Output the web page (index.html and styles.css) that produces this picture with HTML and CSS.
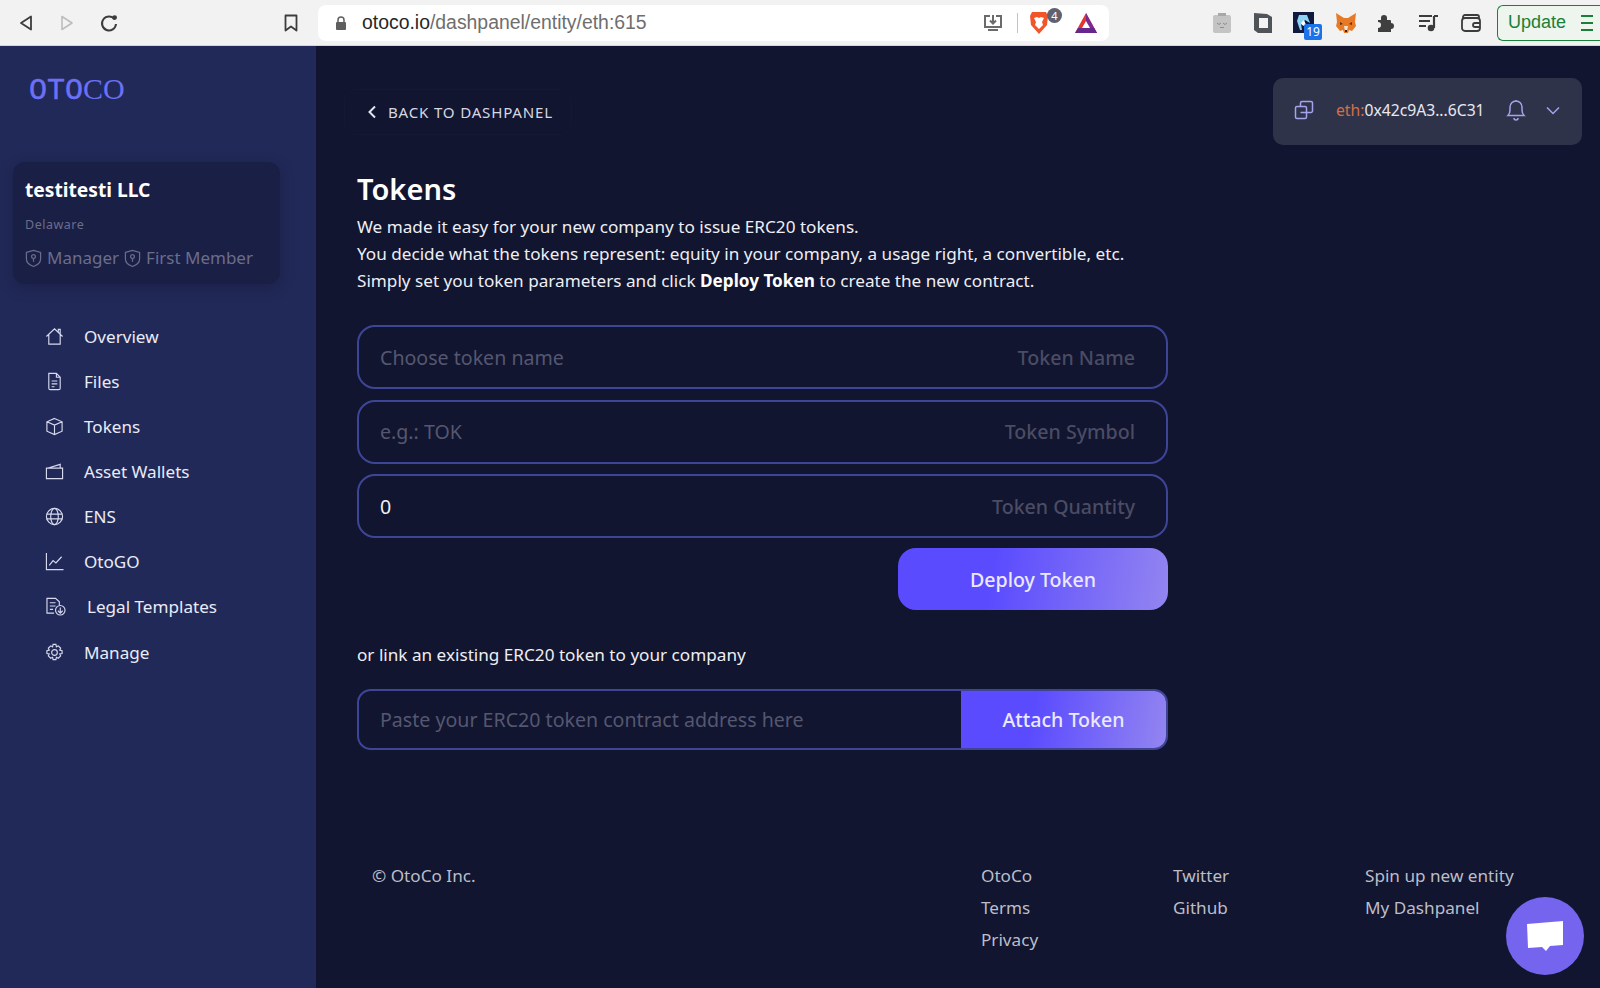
FILE: index.html
```html
<!DOCTYPE html>
<html lang="en">
<head>
    <meta charset="UTF-8">
    <title>Tokens - OtoCo</title>
    <link rel="stylesheet" href="styles.css">
</head>
<body>
    <!-- Browser toolbar -->
    <div class="toolbar">
        <div class="nav-buttons">
            <svg width="18" height="20" viewBox="0 0 18 20"><path d="M14 3.500v13L4 10z" fill="none" stroke="#3c3c3c" stroke-width="1.800" stroke-linejoin="round"/></svg>
            <svg width="18" height="20" viewBox="0 0 18 20"><path d="M4 3.500v13L14 10z" fill="none" stroke="#bdbdbd" stroke-width="1.600" stroke-linejoin="round"/></svg>
            <svg width="20" height="20" viewBox="0 0 20 20"><path d="M15.600 6.200A7 7 0 1 0 17 11" fill="none" stroke="#3c3c3c" stroke-width="2"/><circle cx="15.600" cy="4.600" r="2.400" fill="#3c3c3c"/></svg>
        </div>
        <svg class="bookmark" width="14" height="18" viewBox="0 0 14 18"><path d="M1.500 1.500h11v15L7 12.500 1.500 16.500z" fill="none" stroke="#3c3c3c" stroke-width="1.800" stroke-linejoin="round"/></svg>
        <div class="omnibox">
            <svg width="12" height="14" viewBox="0 0 12 14"><path d="M3 6V4a3 3 0 0 1 6 0v2" fill="none" stroke="#5f5f5f" stroke-width="1.500"/><rect x="1" y="6" width="10" height="8" rx="1" fill="#5f5f5f"/></svg>
            <span class="url"><b>otoco.io</b>/dashpanel/entity/eth:615</span>
            <svg width="20" height="20" viewBox="0 0 20 20"><path d="M7 3H2v11h16V3h-5M10 2v8M7 7.500l3 3 3-3M5 17h10" fill="none" stroke="#6b6b6b" stroke-width="2"/></svg>
            <i class="omni-sep"></i>
            <span class="brave">
                <svg width="20" height="24" viewBox="0 0 20 24"><path d="M3 1h14l2 4-1 9-8 9-8-9-1-9z" fill="#f1562b"/><path d="M5 7l3-1 2 1 2-1 3 1-2 4 1 3-4 4-4-4 1-3z" fill="#fff"/></svg>
                <span class="brave-count">4</span>
            </span>
            <svg class="bat" width="24" height="22" viewBox="0 0 24 22"><path d="M12 1L1 21h22z" fill="#e2352f"/><path d="M12 1l11 20h-7L12 13z" fill="#7b2a8f"/><path d="M1 21h22l-3-5H4z" fill="#66278d"/><path d="M12 9l-4 7h8z" fill="#fff"/></svg>
        </div>
        <div class="extensions">
            <svg width="20" height="22" viewBox="0 0 20 22"><rect x="1" y="3" width="18" height="18" rx="2" fill="#c4c4c4"/><rect x="6" y="1" width="8" height="3" fill="#a8a8a8"/><path d="M5 11l2 1.500 2-1.500M11 11l2 1.500 2-1.500M8 15.500h4" fill="none" stroke="#8c8c8c"/></svg>
            <svg width="20" height="22" viewBox="0 0 20 22"><path d="M1 1l13 1 5 3v16H5l-4-3z" fill="#4f5459"/><rect x="6" y="6" width="9" height="10" fill="#f2f2f2"/></svg>
            <span class="ext-badge">
                <svg width="21" height="21" viewBox="0 0 21 21"><rect width="21" height="21" fill="#101a3e"/><path d="M6 3h8l3 8-5-3-4 4 1 6H7L4 9z" fill="#8fd3f4"/><path d="M8 11a3 3 0 0 0 5 2l-2-5z" fill="#fff"/></svg>
                <span class="ext-count">19</span>
            </span>
            <svg width="22" height="22" viewBox="0 0 22 22"><path d="M1 1l8 5h4l8-5-1 9 1 4-4 5-3-1-1 3H9l-1-3-3 1-4-5 1-4z" fill="#e87a25"/><path d="M9 14h4l-1 5h-2z" fill="#f5e3d0"/><path d="M5 10l3 2-3 1zM17 10l-3 2 3 1z" fill="#5b3416"/><path d="M10 18h2v2h-2z" fill="#33261b"/></svg>
            <svg width="20" height="20" viewBox="0 0 20 20"><path d="M1 7h3V5a3 3 0 0 1 6 0v2h3a1 1 0 0 1 1 1v2a3 3 0 0 1 0 6v3H1v-4a3 3 0 0 0 0-6z" fill="#3f3f3f"/></svg>
            <svg width="22" height="20" viewBox="0 0 22 20"><path d="M1 3h13M1 8h11M1 13h7" stroke="#3c3c3c" stroke-width="2" fill="none"/><path d="M16 3v12" stroke="#3c3c3c" stroke-width="2.200"/><path d="M16 3h4" stroke="#3c3c3c" stroke-width="2"/><circle cx="13" cy="15" r="3.300" fill="#3c3c3c"/></svg>
            <svg width="22" height="20" viewBox="0 0 22 20"><path d="M3 5V4a2 2 0 0 1 2-2h12a2 2 0 0 1 2 2v1" fill="none" stroke="#3c3c3c" stroke-width="1.800"/><rect x="2" y="5" width="18" height="13" rx="3" fill="none" stroke="#3c3c3c" stroke-width="1.800"/><path d="M20 10h-5a2 2 0 0 0 0 4h5" fill="none" stroke="#3c3c3c" stroke-width="1.800"/></svg>
        </div>
        <div class="update">
            <span>Update</span>
            <svg width="14" height="18" viewBox="0 0 14 18"><path d="M1 2h12M1 9h12M1 16h12" stroke="#1a7f37" stroke-width="1.800"/></svg>
        </div>
    </div>

    <div class="app">
        <!-- Sidebar -->
        <aside class="sidebar">
            <div class="logo"><span class="logo-mono">OTO</span><span class="logo-serif">CO</span></div>
            <div class="entity-card">
                <div class="entity-name">testitesti LLC</div>
                <div class="entity-state">Delaware</div>
                <div class="entity-badges">
                    <svg class="shield" viewBox="0 0 18 20"><path d="M1.500 3.500L9 1.500l7.500 2v7c0 4-3.500 6.500-7.500 8-4-1.500-7.500-4-7.500-8z"/><circle cx="9" cy="8" r="2"/><path d="M9 10v3.500"/></svg>
                    <span>Manager</span>
                    <svg class="shield" viewBox="0 0 18 20"><path d="M1.500 3.500L9 1.500l7.500 2v7c0 4-3.500 6.500-7.500 8-4-1.500-7.500-4-7.500-8z"/><circle cx="9" cy="8" r="2"/><path d="M9 10v3.500"/></svg>
                    <span>First Member</span>
                </div>
            </div>
            <nav class="menu">
                <a class="menu-item">
                    <svg viewBox="0 0 20 20"><path d="M1.500 10L10 2l8.500 8M4 8v10h12V8M14 5V2.500h2v4.500"/></svg>
                    <span>Overview</span>
                </a>
                <a class="menu-item">
                    <svg viewBox="0 0 20 20"><path d="M4 1.500h8l4 4V17a1.500 1.500 0 0 1-1.500 1.500h-9A1.500 1.500 0 0 1 4 17zM12 1.500v4h4M7 9.500h6M7 12.500h6M7 15.500h3"/></svg>
                    <span>Files</span>
                </a>
                <a class="menu-item">
                    <svg viewBox="0 0 20 20"><path d="M10 1.500l8 3.500v10l-8 3.500L2 15V5zM2 5l8 3.500L18 5M10 8.500v10"/></svg>
                    <span>Tokens</span>
                </a>
                <a class="menu-item">
                    <svg viewBox="0 0 20 20"><path d="M1.500 6.500h17v11h-17zM2.500 6.500L16 2.500v4"/></svg>
                    <span>Asset Wallets</span>
                </a>
                <a class="menu-item">
                    <svg viewBox="0 0 20 20"><circle cx="10" cy="10" r="8.500"/><ellipse cx="10" cy="10" rx="4" ry="8.500"/><path d="M1.500 7.500h17M1.500 12.500h17"/></svg>
                    <span>ENS</span>
                </a>
                <a class="menu-item">
                    <svg viewBox="0 0 20 20"><path d="M1.500 1v17.500H19.500M4.500 14l4-5 3 2.500 6-6.500"/></svg>
                    <span>OtoGO</span>
                </a>
                <a class="menu-item legal">
                    <svg viewBox="0 0 22 20"><path d="M9 17H1.500V1.500h9l4 3.500v4M4.500 6h6M4.500 9.500h6M4.500 13h3.500"/><circle cx="15.500" cy="14" r="5"/><path d="M15.500 11v6M13 14.500l2.500 2.500 2.500-2.500"/></svg>
                    <span>Legal Templates</span>
                </a>
                <a class="menu-item manage">
                    <svg viewBox="0 0 20 20"><circle cx="10" cy="10" r="3"/><path d="M8.500 1.500h3l.5 2.500 2-1 2.500 2.500-1 2 2.500.5v3l-2.500.5 1 2-2.500 2.500-2-1-.5 2.500h-3l-.5-2.500-2 1-2.500-2.500 1-2-2.500-.5v-3l2.500-.5-1-2 2.500-2.500 2 1z"/></svg>
                    <span>Manage</span>
                </a>
            </nav>
        </aside>

        <!-- Main content -->
        <main class="content">
            <div class="top-row">
                <a class="back-link">
                    <svg width="10" height="14" viewBox="0 0 10 14"><path d="M8 1.500L2.500 7 8 12.500" fill="none" stroke="#e4e4ee" stroke-width="2"/></svg>
                    <span>BACK TO DASHPANEL</span>
                </a>
                <div class="wallet">
                    <svg class="wallet-icon" width="20" height="20" viewBox="0 0 20 20"><path d="M6.500 6V3a1.500 1.500 0 0 1 1.500-1.500h9A1.500 1.500 0 0 1 18.500 3v8a1.500 1.500 0 0 1-1.500 1.500h-4.500"/><rect x="1.500" y="6.500" width="11" height="12" rx="1.500"/><path d="M6.500 12.500h6"/></svg>
                    <span class="wallet-addr"><span class="eth">eth:</span>0x42c9A3...6C31</span>
                    <svg class="wallet-icon bell" width="20" height="22" viewBox="0 0 20 22"><path d="M2 16.500c1.500-1.500 2-3 2-5.500V8a6 6 0 0 1 12 0v3c0 2.500.5 4 2 5.500zM8 19a2 2 0 0 0 4 0M10 2V1"/></svg>
                    <svg class="wallet-icon chevron" width="14" height="9" viewBox="0 0 14 9"><path d="M1 1.500l6 6 6-6"/></svg>
                </div>
            </div>

            <section class="panel">
                <h1>Tokens</h1>
                <p class="intro">We made it easy for your new company to issue ERC20 tokens.<br>
                You decide what the tokens represent: equity in your company, a usage right, a convertible, etc.<br>
                Simply set you token parameters and click <b>Deploy Token</b> to create the new contract.</p>

                <div class="fields">
                    <label class="field"><span class="hint">Choose token name</span><span class="field-label">Token Name</span></label>
                    <label class="field"><span class="hint">e.g.: TOK</span><span class="field-label">Token Symbol</span></label>
                    <label class="field"><span class="value">0</span><span class="field-label">Token Quantity</span></label>
                </div>
                <div class="deploy-row"><button class="primary deploy">Deploy Token</button></div>

                <p class="link-text">or link an existing ERC20 token to your company</p>
                <div class="attach">
                    <span class="hint">Paste your ERC20 token contract address here</span>
                    <button class="primary attach-btn">Attach Token</button>
                </div>
            </section>

            <footer class="footer">
                <div>© OtoCo Inc.</div>
                <div class="footer-col"><a>OtoCo</a><a>Terms</a><a>Privacy</a></div>
                <div class="footer-col"><a>Twitter</a><a>Github</a></div>
                <div class="footer-col"><a>Spin up new entity</a><a>My Dashpanel</a></div>
            </footer>
        </main>
    </div>

    <!-- Chat widget -->
    <div class="chat">
        <svg width="38" height="32" viewBox="0 0 38 32"><path d="M1 4l36-3 0 24-13 1-4 5-4-4-14 1z" fill="#fff"/></svg>
    </div>
</body>
</html>
```

FILE: styles.css
```css
/* Global Styling */
* {
    box-sizing: border-box;
}

html, body {
    height: 100%;
}

body {
    margin: 0;
    height: 988px;
    overflow: hidden;
    display: flex;
    flex-direction: column;
    font-family: "Noto Sans", Roboto, sans-serif;
    font-size: 17.15px;
    color: #e6e6ee;
    background: #11152f;
}

/* Browser toolbar */
.toolbar {
    height: 46px;
    flex: none;
    display: flex;
    align-items: center;
    background: #f2f2f2;
    border-bottom: 1px solid #d4d6dc;
    color: #3c3c3c;
}

.toolbar > * {
    flex: none;
}

.nav-buttons {
    display: flex;
    align-items: center;
    gap: 23px;
    margin-left: 17px;
}

.bookmark {
    margin-left: 165px;
}

.omnibox {
    width: 791px;
    height: 36px;
    margin-left: 20px;
    display: flex;
    align-items: center;
    background: #fff;
    border-radius: 8px;
    padding-left: 17px;
}

.url {
    margin-left: 15px;
    font-family: "Liberation Sans", sans-serif;
    font-size: 19.4px;
    color: #6e6e6e;
    width: 621px;
    flex: none;
}

.url b {
    font-weight: normal;
    color: #262626;
}

.omni-sep {
    width: 1px;
    height: 20px;
    background: #c4c4c4;
    margin-left: 14px;
}

.brave {
    position: relative;
    display: flex;
    margin-left: 11px;
}

.brave-count {
    position: absolute;
    left: 18px;
    top: -3px;
    width: 15px;
    height: 15px;
    border-radius: 50%;
    background: #5d6170;
    color: #fff;
    font-size: 11px;
    line-height: 15px;
    text-align: center;
}

.bat {
    margin-left: 25px;
}

.extensions {
    display: flex;
    align-items: center;
    gap: 20.5px;
    margin-left: 103px;
}

.ext-badge {
    position: relative;
    display: flex;
}

.ext-count {
    position: absolute;
    left: 11px;
    top: 12px;
    width: 18px;
    height: 16px;
    border-radius: 2px;
    background: #1a73e8;
    color: #fff;
    font-size: 12px;
    line-height: 16px;
    text-align: center;
}

.update {
    display: flex;
    align-items: center;
    gap: 14px;
    width: 103px;
    height: 36px;
    margin-left: 15px;
    padding-left: 10px;
    border: 1px solid #1a7f37;
    border-right: 0;
    border-radius: 6px 0 0 6px;
    background: #edf5ee;
    color: #1a7f37;
    font-family: "Liberation Sans", sans-serif;
    font-size: 18px;
}

/* Layout */
.app {
    flex: 1;
    display: flex;
    min-height: 0;
}

/* Sidebar */
.sidebar {
    width: 316px;
    flex: none;
    background: #212958;
    padding: 30px 0 0 13px;
}

.logo {
    margin-left: 16px;
    height: 26px;
    line-height: 26px;
    color: #6c70f5;
    white-space: nowrap;
}

.logo-mono {
    font-family: "Liberation Mono", monospace;
    font-size: 30px;
    -webkit-text-stroke: 0.5px #6c70f5;
}

.logo-serif {
    font-family: "Liberation Serif", serif;
    font-size: 30px;
}

.entity-card {
    width: 267px;
    height: 122px;
    margin-top: 60px;
    padding: 14px 12px;
    background: #1a1f45;
    border-radius: 12px;
    box-shadow: 0 4px 14px rgba(16, 19, 45, 0.35);
}

.entity-name {
    font-size: 19.2px;
    font-weight: 700;
    line-height: 28px;
    color: #fff;
}

.entity-state {
    margin-top: 12px;
    font-size: 12.5px;
    line-height: 18px;
    letter-spacing: 0.5px;
    color: #6a6d8b;
}

.entity-badges {
    margin-top: 11px;
    display: flex;
    align-items: center;
    gap: 5px;
    font-size: 17px;
    line-height: 26px;
    color: #6a6d8b;
}

.shield {
    width: 17px;
    height: 19px;
    fill: none;
    stroke: #6a6d8b;
    stroke-width: 1.300;
}

.menu {
    margin-top: 30px;
    margin-left: 32px;
    display: flex;
    flex-direction: column;
}

.menu-item {
    height: 45px;
    display: flex;
    align-items: center;
    gap: 20px;
    font-size: 17.1px;
    color: #e9ebf7;
}

.menu-item svg {
    width: 19px;
    height: 19px;
    flex: none;
    fill: none;
    stroke: #d7daee;
    stroke-width: 1.200;
}

.legal svg {
    width: 22px;
}

.manage {
    margin-top: 1px;
}

/* Main content */
.content {
    flex: 1;
    min-width: 0;
}

.top-row {
    display: flex;
    justify-content: space-between;
    align-items: flex-start;
    padding: 32px 18px 0 29px;
}

.back-link {
    width: 226px;
    height: 44px;
    margin-top: 12px;
    display: flex;
    align-items: center;
    gap: 11px;
    padding-left: 22px;
    border-radius: 12px;
    box-shadow: 0 0 0 1px rgba(40, 44, 85, 0.15);
    font-size: 15.1px;
    letter-spacing: 0.8px;
    color: #d6d7e2;
}

.wallet {
    width: 309px;
    height: 67px;
    display: flex;
    align-items: center;
    padding: 0 0 3px 21px;
    background: #2f3349;
    border-radius: 10px;
}

.wallet-icon {
    fill: none;
    stroke: #a3a4ec;
    stroke-width: 1.500;
    flex: none;
}

.wallet-addr {
    margin-left: 22px;
    font-size: 15.7px;
    color: #e8e8f0;
    white-space: nowrap;
}

.eth {
    color: #d0704a;
}

.bell {
    margin-left: 21px;
}

.chevron {
    margin-left: 20px;
}

.panel {
    width: 811px;
    margin-left: 41px;
}

h1 {
    margin: 25px 0 0;
    font-size: 29px;
    line-height: 38px;
    font-weight: 600;
    color: #fff;
}

.intro {
    margin: 5px 0 0;
    line-height: 27px;
    color: #eeeef4;
}

.intro b {
    font-weight: 700;
    color: #fff;
}

.fields {
    margin-top: 31px;
    display: flex;
    flex-direction: column;
    gap: 10.5px;
}

.field {
    height: 64px;
    display: flex;
    align-items: center;
    justify-content: space-between;
    padding: 0 31px 0 21px;
    border: 2px solid #3f4596;
    border-radius: 18px;
    font-size: 19.6px;
}

.hint {
    color: #555770;
}

.value {
    color: #f0f0f5;
}

.field-label {
    color: #4a4c64;
    font-weight: 500;
}

.deploy-row {
    margin-top: 10px;
    display: flex;
    justify-content: flex-end;
}

.primary {
    border: 0;
    padding: 0;
    font-family: inherit;
    font-size: 19.6px;
    font-weight: 500;
    color: #ebe9ff;
    background: linear-gradient(100deg, #5a4bff 0%, #5a4bff 35%, #9385f0 100%);
}

.deploy {
    width: 270px;
    height: 62px;
    border-radius: 18px;
}

.link-text {
    margin: 31px 0 0;
    line-height: 27px;
    color: #eeeef4;
}

.attach {
    height: 61px;
    margin-top: 21px;
    display: flex;
    align-items: center;
    justify-content: space-between;
    padding-left: 21px;
    border: 2px solid #3f4596;
    border-radius: 14px;
    font-size: 19.6px;
    overflow: hidden;
}

.attach-btn {
    width: 205px;
    height: 100%;
}

/* Footer */
.footer {
    margin-top: 110px;
    padding-left: 56px;
    display: grid;
    grid-template-columns: 609px 192px 192px 1fr;
    line-height: 32px;
    color: #bcbdc9;
}

.footer-col {
    display: flex;
    flex-direction: column;
}

/* Chat widget */
.chat {
    position: absolute;
    left: 1506px;
    top: 897px;
    width: 78px;
    height: 78px;
    border-radius: 50%;
    background: #7564ee;
    display: flex;
    align-items: center;
    justify-content: center;
}
```
